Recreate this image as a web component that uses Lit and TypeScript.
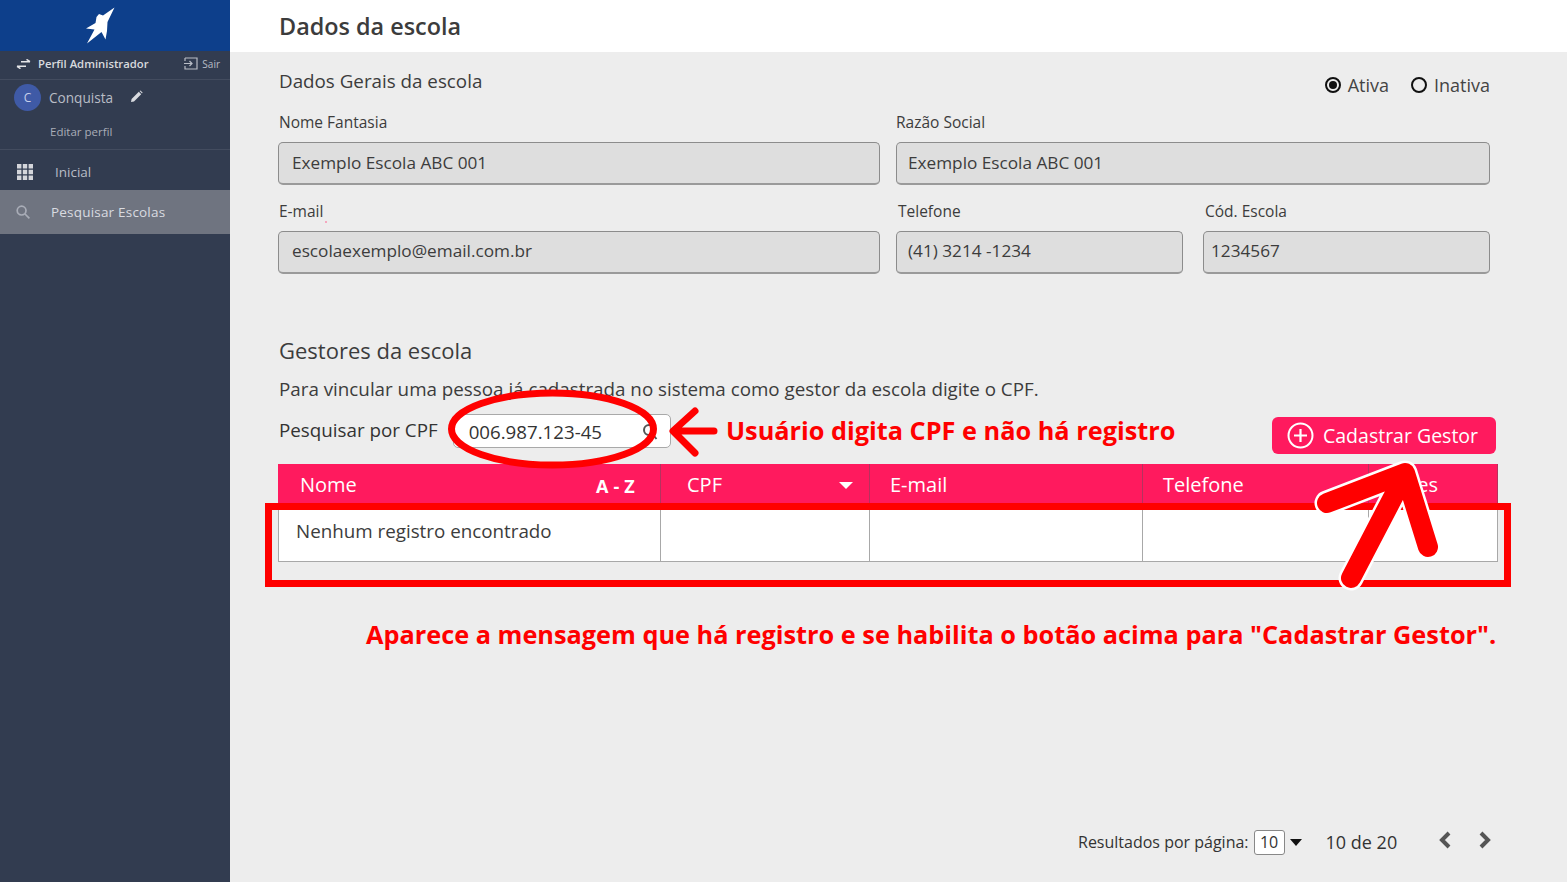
import { LitElement, html, css, svg } from "lit";
import { customElement } from "lit/decorators.js";

@customElement("app-root")
export class AppRoot extends LitElement {
  static styles = css`
    :host { display: block; width: 1567px; height: 882px; position: relative; overflow: hidden; font-family: "Open Sans", sans-serif; color: #333; background: #ededed; }
    .page { display: flex; height: 882px; }
    .side { width: 230px; flex: none; background: #323c50; color: #c9ccd3; display: flex; flex-direction: column; }
    .logo { height: 51px; background: #0d3f8b; display: flex; padding-left: 80px; box-sizing: border-box; }
    .profile { height: 29px; display: flex; align-items: center; padding: 0 10px 3px 16px; box-sizing: border-box; font-size: 11.3px; color: #d8dade; border-bottom: 1px solid #434c5f; font-weight: 600; }
    .profile svg { margin-right: 7px; }
    .grow { flex: 1; }
    .sair { display: flex; align-items: center; font-size: 10px; color: #b9bdc6; font-weight: 400; }
    .sair svg { margin-right: 4px; }
    .user { height: 70px; border-bottom: 1px solid #434c5f; padding: 4px 0 0 14px; box-sizing: border-box; }
    .urow { display: flex; align-items: center; font-size: 13.6px; color: #b9bdc6; }
    .avatar { width: 27px; height: 27px; border-radius: 50%; background: #3f5aa6; color: #c7d0ea; display: flex; align-items: center; justify-content: center; font-size: 12px; margin-right: 8px; }
    .urow svg { margin-left: 17px; margin-top: -3px; }
    .edit { font-size: 11.5px; color: #a9adb7; margin: 13px 0 0 36px; }
    .nav { display: flex; align-items: center; height: 40px; font-size: 13.5px; color: #b9bdc6; padding: 4px 0 0 17px; box-sizing: border-box; }
    .nav span { margin-left: 22px; }
    .nav.active { height: 44px; background: #6f7480; color: #d9dbe0; padding: 0 0 0 16px; }
    .nav.active span { margin-left: 21px; letter-spacing: .2px; }

    .main { flex: 1; min-width: 0; }
    .head { height: 52px; background: #fff; box-sizing: border-box; padding: 0 0 1px 49px; display: flex; align-items: center; font-size: 23.4px; font-weight: 600; color: #3c3c3c; }
    .body { padding: 0 77px 0 49px; position: relative; height: 830px; box-sizing: border-box; }
    .topline { display: flex; justify-content: space-between; height: 59px; padding-top: 16px; box-sizing: border-box; }
    .h2 { font-size: 18.8px; color: #3c3c3c; line-height: 26px; }
    .radios { display: flex; gap: 22px; font-size: 18px; margin-top: 4px; height: 26px; line-height: 26px; color: #444; }
    .radio { display: flex; align-items: center; gap: 7px; }
    .dot { width: 16px; height: 16px; border: 2px solid #111; border-radius: 50%; box-sizing: border-box; display: flex; align-items: center; justify-content: center; }
    .dot i { width: 8px; height: 8px; border-radius: 50%; background: #111; display: block; }
    .formrow { display: grid; gap: 16px; margin-bottom: 16px; margin-left: -1px; }
    .r1 { grid-template-columns: 602px 594px; height: 73px; }
    .r2 { grid-template-columns: 602px 287px 291px; height: 74px; }
    .r2 .f + .f + .f { margin-left: 4px; }
    .f { position: relative; }
    .f label { display: block; font-size: 15.5px; line-height: 20px; margin: 1px 0 10px; color: #3c3c3c; padding-left: 1px; }
    .r1 .f:nth-child(2) label { padding-left: 0; }
    .r2 .f:nth-child(n+2) label { padding-left: 2px; }
    .inp { height: 43px; box-sizing: border-box; border: 1px solid #8c8c8c; border-bottom: 2px solid #9a9a9a; border-radius: 5px; background: #dedede; display: flex; align-items: center; padding: 0 0 2px 13px; font-size: 17.2px; color: #3c3c3c; }
    .r1 .f:nth-child(2) .inp { padding-left: 11px; }
    .r2 .f:nth-child(2) .inp { padding-left: 11px; }
    .r2 .f:nth-child(3) .inp { padding-left: 7px; }
    .r2 .inp { padding-bottom: 4px; }
    .speck { position: absolute; left: 47px; top: 21px; width: 2px; height: 2px; border-radius: 50%; background: #f78fae; }
    .h2b { font-size: 22px; line-height: 28px; color: #3c3c3c; margin-top: 62px; }
    .desc { font-size: 18.8px; line-height: 26px; margin-top: 12px; color: #3c3c3c; }
    .search { display: flex; align-items: center; height: 34px; margin-top: 11px; font-size: 18.8px; position: relative; }
    .cpf { width: 218px; height: 34px; margin-left: 15px; box-sizing: border-box; background: #fff; border: 1px solid #a9a9a9; border-radius: 5px; display: flex; align-items: center; justify-content: space-between; padding: 0 12px 0 15px; font-size: 18.7px; color: #333; margin-top: 2px; }
    .btn { position: absolute; left: 993px; top: 4px; width: 224px; height: 37px; border-radius: 6px; background: #ff1a5e; color: #fff; display: flex; align-items: center; gap: 9px; padding-left: 15px; box-sizing: border-box; font-size: 19.5px; }
    .table { margin-top: 17px; margin-left: -1px; width: 1220px; }
    .tr { display: grid; grid-template-columns: 383px 209px 273px 226px 129px; }
    .th { height: 46px; background: #ff1a5e; color: #fff; font-size: 20px; display: flex; align-items: center; box-sizing: border-box; border-right: 1px solid #b5325e; position: relative; padding-bottom: 6px; }
    .td { height: 52px; background: #fff; box-sizing: border-box; border-right: 1px solid #a8a8a8; border-bottom: 1px solid #a8a8a8; font-size: 18.8px; color: #3c3c3c; padding: 8px 0 0 17px; line-height: 26px; }
    .td:first-child { border-left: 1px solid #a8a8a8; }
    .nome { padding-left: 22px; }
    .cpfh { padding-left: 26px; }
    .mailh { padding-left: 20px; }
    .telh { padding-left: 20px; }
    .acoesh { padding-left: 14px; }
    .az { position: absolute; right: 25px; top: 10px; font-size: 18px; font-weight: 700; letter-spacing: .2px; }
    .caret { position: absolute; right: 16px; top: 18px; width: 0; height: 0; border-left: 7.5px solid transparent; border-right: 7.5px solid transparent; border-top: 7px solid #fff; }
    .pager { position: absolute; left: 848px; top: 772px; display: flex; align-items: center; font-size: 16px; color: #333; height: 36px; }
    .sel { width: 31px; height: 25px; margin-left: 5px; border: 1px solid #888; border-radius: 3px; box-sizing: border-box; background: #fff; display: flex; align-items: center; justify-content: center; font-size: 16px; }
    .tri { margin-left: 5px; width: 0; height: 0; border-left: 6.5px solid transparent; border-right: 6.5px solid transparent; border-top: 7px solid #111; }
    .count { margin-left: 24px; font-size: 18px; width: 112px; }
    .pager svg { margin-top: -4px; }
    .pager svg + svg { margin-left: 26px; }
    .overlay { position: absolute; left: 0; top: 0; width: 1567px; height: 882px; pointer-events: none; }
    .note { position: absolute; color: #ff0000; font-weight: 700; font-size: 25.3px; line-height: 34px; white-space: nowrap; }
    .n1 { left: 726px; top: 413px; }
    .n2 { left: 366px; top: 617px; }
  `;

  render() {
    return html`
      <div class="page">
        <aside class="side">
          <div class="logo">
            <svg width="40" height="51" viewBox="80 0 40 51"><path fill="#fff" d="M114.500 7.500 107.500 22 107 31 105.500 39.500 101.500 32 87 43.500 94.500 29.500 86 28.500 95.500 23 96.500 17 99 14 103 15.500Z"/></svg>
          </div>
          <div class="profile">
            <svg width="15" height="10" viewBox="0 0 15 10" fill="none" stroke="#e4e5e8" stroke-width="1.4"><path d="M5 2.700h9M10.500 0.300 14 2.700 M1 7.300h9M4.500 9.700 1 7.300"/></svg>
            Perfil Administrador
            <span class="grow"></span>
            <span class="sair"><svg width="14" height="13" viewBox="0 0 14 13" fill="none" stroke="#b9bdc6" stroke-width="1.2"><path d="M1 1h12v11H1V9M1 4V1M0 6.500h8M5.500 4 8 6.500 5.500 9"/></svg>Sair</span>
          </div>
          <div class="user">
            <div class="urow"><span class="avatar">C</span>Conquista
              <svg width="13" height="13" viewBox="0 0 13 13"><path fill="#d9dbe0" d="M1 12 1.600 9 8.800 1.800 11.200 4.200 4 11.400ZM9.600 1 10.400.4 12.600 2.600 12 3.400Z"/></svg>
            </div>
            <div class="edit">Editar perfil</div>
          </div>
          <div class="nav">
            <svg width="16" height="16" viewBox="0 0 16 16" fill="#d4d6db"><path d="M0 0h4.400v4.400H0zM5.800 0h4.400v4.400H5.800zM11.600 0H16v4.400h-4.400zM0 5.800h4.400v4.400H0zM5.800 5.800h4.400v4.400H5.800zM11.600 5.800H16v4.400h-4.400zM0 11.600h4.400V16H0zM5.800 11.600h4.400V16H5.800zM11.600 11.600H16V16h-4.400z"/></svg>
            <span>Inicial</span>
          </div>
          <div class="nav active">
            <svg width="14" height="14" viewBox="0 0 14 14" fill="none" stroke="#a9adb7" stroke-width="1.7"><circle cx="5.600" cy="5.600" r="4.400"/><path d="M9 9l4.400 4.400"/></svg>
            <span>Pesquisar Escolas</span>
          </div>
        </aside>
        <main class="main">
          <div class="head">Dados da escola</div>
          <div class="body">
            <div class="topline">
              <div class="h2">Dados Gerais da escola</div>
              <div class="radios">
                <div class="radio"><span class="dot"><i></i></span>Ativa</div>
                <div class="radio"><span class="dot"></span>Inativa</div>
              </div>
            </div>
            <div class="formrow r1">
              <div class="f"><label>Nome Fantasia</label><div class="inp">Exemplo Escola ABC 001</div></div>
              <div class="f"><label>Razão Social</label><div class="inp">Exemplo Escola ABC 001</div></div>
            </div>
            <div class="formrow r2">
              <div class="f"><label>E-mail</label><i class="speck"></i><div class="inp">escolaexemplo@email.com.br</div></div>
              <div class="f"><label>Telefone</label><div class="inp">(41) 3214 -1234</div></div>
              <div class="f"><label>Cód. Escola</label><div class="inp">1234567</div></div>
            </div>
            <div class="h2b">Gestores da escola</div>
            <div class="desc">Para vincular uma pessoa já cadastrada no sistema como gestor da escola digite o CPF.</div>
            <div class="search">Pesquisar por CPF
              <div class="cpf">006.987.123-45
                <svg width="16" height="17" viewBox="0 0 16 17" fill="none" stroke="#555" stroke-width="2"><circle cx="7" cy="7" r="5"/><path d="M10.500 11l4 5"/></svg>
              </div>
              <div class="btn">
                <svg width="27" height="27" viewBox="0 0 27 27" fill="none" stroke="#fff" stroke-width="2"><circle cx="13.500" cy="13.500" r="12"/><path d="M13.500 7v13M7 13.500h13" stroke-width="2.200"/></svg>
                Cadastrar Gestor
              </div>
            </div>
            <div class="table">
              <div class="tr">
                <div class="th nome">Nome<span class="az">A - Z</span></div>
                <div class="th cpfh">CPF<span class="caret"></span></div>
                <div class="th mailh">E-mail</div>
                <div class="th telh">Telefone</div>
                <div class="th acoesh">Ações</div>
              </div>
              <div class="tr">
                <div class="td">Nenhum registro encontrado</div>
                <div class="td"></div><div class="td"></div><div class="td"></div><div class="td"></div>
              </div>
            </div>
            <div class="pager">
              Resultados por página:
              <span class="sel">10</span><span class="tri"></span>
              <span class="count">10 de 20</span>
              <svg width="14" height="18" viewBox="0 0 14 18" fill="none" stroke="#555" stroke-width="4"><path d="M11 2 4 9l7 7"/></svg>
              <svg width="14" height="18" viewBox="0 0 14 18" fill="none" stroke="#555" stroke-width="4"><path d="M3 2l7 7-7 7"/></svg>
            </div>
          </div>
        </main>
      </div>
      <svg class="overlay" viewBox="0 0 1567 882" fill="none">
        ${svg`
          <rect x="268.500" y="506.500" width="1239" height="77" stroke="#ff0000" stroke-width="7"/>
          <ellipse cx="552.500" cy="429" rx="101" ry="36" stroke="#ff0000" stroke-width="7"/>
          <path d="M714 431H675M695 411 673 431 695 453" stroke="#ff0000" stroke-width="7" stroke-linecap="round" stroke-linejoin="round"/>
          <path d="M1351 578 1401 482M1327 503 1405 473 1428 547" stroke="#fff" stroke-width="25" stroke-linecap="round" stroke-linejoin="round"/>
          <path d="M1351 578 1401 482M1327 503 1405 473 1428 547" stroke="#ff0000" stroke-width="20" stroke-linecap="round" stroke-linejoin="round"/>
        `}
      </svg>
      <div class="note n1">Usuário digita CPF e não há registro</div>
      <div class="note n2">Aparece a mensagem que há registro e se habilita o botão acima para "Cadastrar Gestor".</div>
    `;
  }
}
